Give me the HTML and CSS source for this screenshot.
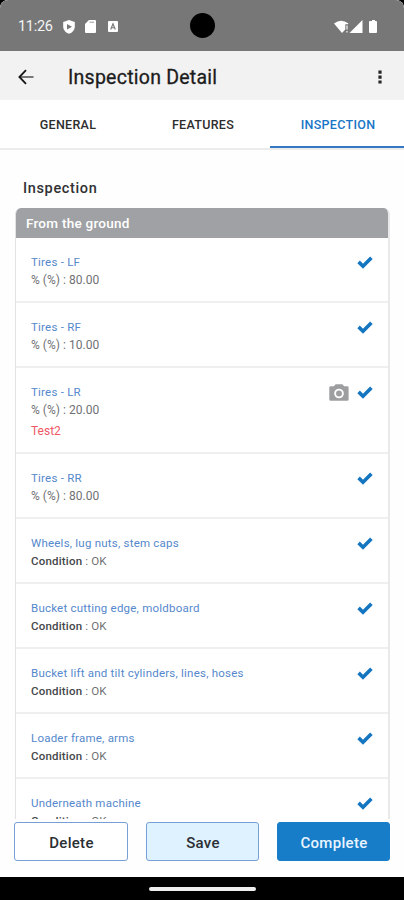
FILE: index.html
```
<!DOCTYPE html>
<html lang="en">
<head>
<meta charset="utf-8">
<title>Inspection Detail</title>
<link rel="stylesheet" href="styles.css">
</head>
<body>
<svg class="defs" width="0" height="0">
  <symbol id="check" viewBox="0 0 16 13"><path d="M1.6 5.9 L6 10.2 L14.4 1.8" fill="none" stroke="#1475c0" stroke-width="3.6"/></symbol>
</svg>
<div class="phone">
  <div class="status">
    <span class="time">11:26</span>
    <svg class="shield" width="12" height="14" viewBox="0 0 12 14"><path d="M6 0 L11.8 2 V6.5 C11.8 10 9.3 12.6 6 13.8 C2.7 12.6 .2 10 .2 6.5 V2 Z" fill="#fff"/><path d="M4 4 L9 6.7 L4 9.4 Z" fill="#777"/></svg>
    <svg class="sd" width="11" height="13" viewBox="0 0 11 13"><path d="M4 0 H10 Q11 0 11 1 V12 Q11 13 10 13 H1 Q0 13 0 12 V4 Z" fill="#fff"/><path d="M4.5 2.2H9" stroke="#999" stroke-width="1"/></svg>
    <svg class="abox" width="10" height="11" viewBox="0 0 10 11"><rect width="10" height="11" rx="1" fill="#fff"/><path d="M2.7 8.5 L5 2.7 L7.3 8.5 M3.5 6.7 H6.5" fill="none" stroke="#777" stroke-width="1.1"/></svg>
    <span class="lens"></span>
    <svg class="signals" width="45" height="14" viewBox="0 0 45 14"><path d="M0 3.5 Q7-2 14.5 3.5 L13.8 4.3 H11.3 V9.5 L8 13 Z" fill="#fff"/><path d="M13 5.5 V9.5 M13 11 V12.5" stroke="#ddd" stroke-width="1.5"/><path d="M28.5 0 V13 H15.5 Z" fill="#fff"/><path d="M37 1 H38 V0 H41 V1 H42 Q43 1 43 2 V12 Q43 13 42 13 H36 Q35 13 35 12 V2 Q35 1 36 1 Z" fill="#fff"/></svg>
  </div>
  <header class="bar">
    <svg class="back" width="16" height="16" viewBox="0 0 16 16"><path d="M15.5 8 H1.6" fill="none" stroke="#777" stroke-width="1.8"/><path d="M8 1.2 L1.4 8 L8 14.8" fill="none" stroke="#151515" stroke-width="1.8"/></svg>
    <h1>Inspection Detail</h1>
    <svg class="more" width="4" height="14" viewBox="0 0 4 14"><path d="M.4.5h3.2v3.2H.4zM.4 5.5h3.2v3.2H.4zM.4 10.4h3.2v3.2H.4z" fill="#252525"/></svg>
  </header>
  <nav class="tabs">
    <span class="tab">GENERAL</span><span class="tab">FEATURES</span><span class="tab active">INSPECTION</span>
  </nav>
  <main class="content">
    <h2>Inspection</h2>
    <section class="card">
      <h3>From the ground</h3>
      <div class="row"><div class="info"><p class="name">Tires - LF</p><p class="val pct">% (%) : 80.00</p></div><svg class="ok"><use href="#check"/></svg></div>
      <div class="row"><div class="info"><p class="name">Tires - RF</p><p class="val pct">% (%) : 10.00</p></div><svg class="ok"><use href="#check"/></svg></div>
      <div class="row tall"><div class="info"><p class="name">Tires - LR</p><p class="val pct">% (%) : 20.00</p><p class="note">Test2</p></div>
        <svg class="cam" width="20" height="17" viewBox="0 0 20 17"><path d="M1.5 2.3 H5 L6 .8 Q6.4.3 7 .3 H13 Q13.6.3 14 .8 L15 2.3 H18.3 Q19.6 2.3 19.6 3.6 V15.4 Q19.6 16.7 18.3 16.7 H1.6 Q.3 16.7 .3 15.4 V3.6 Q.3 2.3 1.5 2.3 Z" fill="#9c9ea0"/><circle cx="10" cy="9.5" r="3.9" fill="none" stroke="#fff" stroke-width="1.9"/></svg>
        <svg class="ok"><use href="#check"/></svg></div>
      <div class="row"><div class="info"><p class="name">Tires - RR</p><p class="val pct">% (%) : 80.00</p></div><svg class="ok"><use href="#check"/></svg></div>
      <div class="row"><div class="info"><p class="name">Wheels, lug nuts, stem caps</p><p class="val"><b>Condition</b> : OK</p></div><svg class="ok"><use href="#check"/></svg></div>
      <div class="row"><div class="info"><p class="name">Bucket cutting edge, moldboard</p><p class="val"><b>Condition</b> : OK</p></div><svg class="ok"><use href="#check"/></svg></div>
      <div class="row"><div class="info"><p class="name">Bucket lift and tilt cylinders, lines, hoses</p><p class="val"><b>Condition</b> : OK</p></div><svg class="ok"><use href="#check"/></svg></div>
      <div class="row"><div class="info"><p class="name">Loader frame, arms</p><p class="val"><b>Condition</b> : OK</p></div><svg class="ok"><use href="#check"/></svg></div>
      <div class="row"><div class="info"><p class="name">Underneath machine</p><p class="val"><b>Condition</b> : OK</p></div><svg class="ok"><use href="#check"/></svg></div>
    </section>
  </main>
  <footer class="actions">
    <button>Delete</button><button class="save">Save</button><button class="complete">Complete</button>
  </footer>
  <div class="gesture"><span></span></div>
</div>
</body>
</html>
```
FILE: styles.css
```
* { box-sizing: border-box; margin: 0; padding: 0; }
body { background: #000; font-family: Roboto, sans-serif; }
.defs { display: block; }
.phone { width: 404px; height: 900px; display: flex; flex-direction: column; background: #fefefe; overflow: hidden; }
.status { position: relative; flex: none; height: 51px; background: #777; display: flex; align-items: center; padding: 2px 0 0 18px; color: #f4f4f4; }
.phone, .status { border-radius: 8px 8px 0 0; }
.time { width: 36px; font-size: 14.5px; letter-spacing: -.3px; white-space: nowrap; }
.shield { margin-left: 9px; }
.sd { margin-left: 10px; }
.abox { margin-left: 12px; }
.lens { position: absolute; left: 190px; top: 13px; width: 25px; height: 25px; border-radius: 50%; background: #000; }
.signals { margin-left: auto; margin-right: 25px; }
.bar { flex: none; height: 49px; background: #f2f2f2; display: flex; align-items: center; padding: 2px 22px 0 18px; }
.bar h1 { margin-left: 34px; padding-top: 1px; font-size: 19.5px; font-weight: 400; letter-spacing: .25px; color: #1c1c1c; -webkit-text-stroke: .3px #1c1c1c; white-space: nowrap; }
.more { margin-left: auto; }
.tabs { flex: none; height: 50px; display: grid; grid-template-columns: 135px 135px 134px; border-bottom: 2px solid #ececec; background: #fff; }
.tab { height: 48px; line-height: 50px; padding-left: 1px; text-align: center; font-size: 12.5px; font-weight: 500; letter-spacing: .3px; color: #2d2d2d; }
.tab.active { padding-left: 2px; color: #1976c6; border-bottom: 2px solid #3478c2; }
.content { flex: none; height: 669px; overflow: hidden; padding: 0 14px 0 15px; }
.content h2 { height: 58px; padding: 29px 0 0 8px; font-size: 14.5px; line-height: 19px; font-weight: 500; letter-spacing: .65px; color: #303134; }
.card { border: 1px solid #e2e2e2; border-right: 2px solid #e9e9e9; border-top: 0; border-radius: 6px 6px 0 0; overflow: hidden; background: #fff; }
.card h3 { height: 30px; line-height: 31px; padding-left: 10px; background: #9fa1a4; color: #fff; font-size: 13.5px; font-weight: 500; letter-spacing: .25px; }
.row { height: 65px; display: flex; align-items: flex-start; padding: 16px 15px 0 15px; border-bottom: 2px solid #efefef; }
.row.tall { height: 86px; }
.info { flex: 1; }
.info p { font-size: 11.5px; white-space: nowrap; }
.info .name { height: 17px; line-height: 16px; color: #5588cc; letter-spacing: .22px; }
.info .val { height: 21px; line-height: 19px; color: #707174; letter-spacing: .12px; }
.info .pct { font-size: 12px; letter-spacing: .03px; }
.val b { color: #45474a; font-weight: 500; letter-spacing: .2px; }
.info .note { font-size: 12px; line-height: 19px; color: #ef5965; }
.ok { width: 16px; height: 13px; margin-top: 2px; }
.cam { margin: 0 8px 0 0; }
.actions { flex: none; height: 58px; display: grid; grid-template-columns: 114px 113px 113px; column-gap: 18px; padding: 3px 13px 16px 14px; }
.actions button { font: 500 15px Roboto, sans-serif; letter-spacing: .3px; padding: 2px 0 0 1px; border: 1px solid #769fd5; border-radius: 3px; background: #fff; color: #2c2f33; }
.actions .save { background: #def2ff; }
.actions .complete { background: #177dc8; border-color: #177dc8; color: #e9f4ff; }
.gesture { flex: 1; background: #000; display: flex; justify-content: center; padding-top: 10px; }
.gesture span { width: 107px; height: 4px; border-radius: 2px; background: #eee; }
```
